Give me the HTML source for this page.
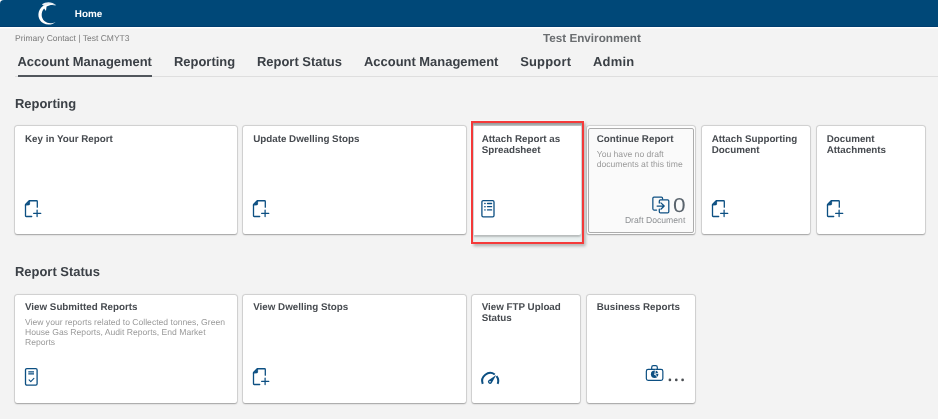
<!DOCTYPE html>
<html lang="en">
<head>
<meta charset="utf-8">
<title>Home</title>
<style>
*{box-sizing:border-box;margin:0;padding:0}
html,body{width:938px;height:419px;overflow:hidden;background:#f3f3f3}
body{position:relative;font-family:"Liberation Sans",Arial,sans-serif;color:#3e4349;-webkit-font-smoothing:antialiased;text-rendering:geometricPrecision}
.abs{position:absolute;white-space:nowrap}
#hdr{position:absolute;left:0;top:0;width:938px;height:26.7px;background:#004878;border-top-left-radius:4px;box-shadow:inset 0 -1px 0 #003e70}
#hdrwrap{position:absolute;left:0;top:0;width:938px;height:29px;background:linear-gradient(#fff 0,#fff 27.8px,#f3f3f3 29px)}
#home{left:74.8px;top:8.8px;font-size:9.9px;line-height:12px;font-weight:bold;color:#fff}
#pc{left:15px;top:33.0px;font-size:8.5px;line-height:11px;color:#7a7a7a}
#env{left:543px;top:32.3px;font-size:11.7px;line-height:14px;font-weight:bold;color:#6a6d70}
.tab{top:53.7px;font-size:12.95px;line-height:16px;font-weight:bold;color:#3b4046}
#sep{position:absolute;left:15px;right:0;top:76px;height:1px;background:#dedede}
#ul{position:absolute;left:17.5px;width:134.3px;top:74.6px;height:2.2px;background:#51565c}
.sec{left:15px;font-size:12.95px;line-height:16px;font-weight:bold;color:#3b4046}
.tile{position:absolute;margin-left:.8px;height:108.7px;background:#fff;border-radius:2px;box-shadow:0 0 0 0.8px rgba(0,0,0,.085),0 .9px 1.6px rgba(0,0,0,.27),0 0 2.5px rgba(0,0,0,.1)}
.r1{top:125.8px}
.r2{top:294.8px}
.r2 .tt{top:7.1px}
.w1 .tt,.w1 .st{left:9.4px}
.w2{width:222.2px}
.w1{width:107.9px}
.tt{position:absolute;left:9.8px;top:8.0px;right:8px;font-size:9.8px;line-height:11.3px;font-weight:bold;color:#474b50}
.st{position:absolute;left:9.8px;right:8px;font-size:8.6px;line-height:9.75px;color:#9a9a9a}
.ic{position:absolute;overflow:visible}
</style>
</head>
<body>
<div id="root" style="position:absolute;left:0;top:0;width:938px;height:419px;will-change:transform">
<div id="hdrwrap"></div>
<div id="hdr"></div>
<svg class="ic" style="left:35.2px;top:-0.1px" width="24.8" height="25.8" viewBox="0 0 24 25">
  <path d="M20.6 5.6 C16.5 2.2 9.5 3.2 5.8 7.6 C1.8 12.4 2.6 19.6 8.2 22.6 C12.2 24.7 17.2 23.8 20 21.2 C16.6 23 12.2 23 9.4 20.6 C5.6 17.3 5.6 11.6 8.8 8.2 L10.6 10.6 L11.2 6.4 C14 4.6 17.6 4.4 20.6 5.6 Z" fill="#fff"/>
  <path d="M6.6 4.2 C10.6 1.6 16.4 1.4 20.6 5.2 C16.8 3.6 12.4 3.6 8.6 5.6 Z" fill="#e8eef4"/>
</svg>
<div id="home" class="abs">Home</div>
<div id="pc" class="abs">Primary Contact | Test CMYT3</div>
<div id="env" class="abs">Test Environment</div>

<div class="abs tab" style="left:17.5px">Account Management</div>
<div class="abs tab" style="left:174px">Reporting</div>
<div class="abs tab" style="left:257px">Report Status</div>
<div class="abs tab" style="left:364px">Account Management</div>
<div class="abs tab" style="left:520.2px;letter-spacing:.2px">Support</div>
<div class="abs tab" style="left:593px;letter-spacing:.25px">Admin</div>
<div id="sep"></div>
<div id="ul"></div>

<div class="abs sec" style="top:95.7px">Reporting</div>

<div class="tile r1 w2" style="left:14.4px"><div class="tt">Key in Your Report</div></div>
<div class="tile r1 w2" style="left:242.6px"><div class="tt">Update Dwelling Stops</div></div>
<div id="redbox" style="position:absolute;left:471.3px;top:120.8px;width:112.7px;height:122.9px;border:2px solid #f53a3a;background:rgba(225,238,238,.45);box-shadow:1.5px 2px 3px rgba(0,0,0,.3), 0 0 0 1px rgba(255,255,255,.55), inset 0 3.5px 3px -1px rgba(0,0,0,.38)"></div>
<div class="tile r1 w1" style="left:472.8px;width:107.1px;top:125.8px;height:109.6px;box-shadow:0 1.2px 2px rgba(0,0,0,.22);border-radius:0 0 2px 0"><div class="tt" style="left:8.1px;top:8px">Attach Report as<br>Spreadsheet</div></div>
<div class="tile r1 w1" style="left:586.5px;background:#fdfdfd"><div style="position:absolute;left:1.2px;top:1.9px;right:1.3px;bottom:1.5px;border:1px solid #acacac;border-radius:2px;background:#fafafa"></div><div class="tt">Continue Report</div>
  <div class="st" style="top:24.5px">You have no draft<br>documents at this time</div>
</div>
<div class="tile r1 w1" style="left:701.5px"><div class="tt">Attach Supporting<br>Document</div></div>
<div class="tile r1 w1" style="left:816.5px"><div class="tt">Document<br>Attachments</div></div>

<div class="abs sec" style="top:264px">Report Status</div>

<div class="tile r2 w2" style="left:14.4px"><div class="tt">View Submitted Reports</div>
  <div class="st" style="top:23.6px">View your reports related to Collected tonnes, Green<br>House Gas Reports, Audit Reports, End Market<br>Reports</div>
</div>
<div class="tile r2 w2" style="left:242.6px"><div class="tt">View Dwelling Stops</div></div>
<div class="tile r2 w1" style="left:471.5px"><div class="tt">View FTP Upload<br>Status</div></div>
<div class="tile r2 w1" style="left:586.5px"><div class="tt">Business Reports</div></div>

<!-- icons -->
<svg class="ic" style="left:24.1px;top:199.6px" width="18" height="18" viewBox="0 0 18 18" fill="none" stroke="#0c4f82" stroke-width="1.3" stroke-linecap="round" stroke-linejoin="round">
  <path d="M7.7 16.5 H2.2 Q1.5 16.5 1.5 15.8 V4.5 L5.2 0.75 H12.6 Q13.3 0.75 13.3 1.45 V7.2"/>
  <path d="M1.7 4.9 L5.6 1 V4.2 Q5.6 4.9 4.9 4.9 Z" fill="#0c4f82" stroke-width="0.8"/>
  <path d="M9.6 13.35 H16.8 M13.1 10.1 V16.6" stroke-width="1.25"/>
</svg>
<svg class="ic" style="left:252.3px;top:199.6px" width="18" height="18" viewBox="0 0 18 18" fill="none" stroke="#0c4f82" stroke-width="1.3" stroke-linecap="round" stroke-linejoin="round">
  <path d="M7.7 16.5 H2.2 Q1.5 16.5 1.5 15.8 V4.5 L5.2 0.75 H12.6 Q13.3 0.75 13.3 1.45 V7.2"/>
  <path d="M1.7 4.9 L5.6 1 V4.2 Q5.6 4.9 4.9 4.9 Z" fill="#0c4f82" stroke-width="0.8"/>
  <path d="M9.6 13.35 H16.8 M13.1 10.1 V16.6" stroke-width="1.25"/>
</svg>
<svg class="ic" style="left:480.5px;top:199.0px" width="15" height="19" viewBox="0 0 15 19" fill="none" stroke="#0c4f82" stroke-width="1.3" stroke-linecap="round" stroke-linejoin="round">
  <rect x="0.9" y="1.7" width="12.1" height="16.1" rx="1.3"/>
  <path d="M6.5 4.5 H10.6 M6.5 7.7 H10.6 M6.5 10.9 H10.6" stroke-width="1.3"/>
  <path d="M3.8 4.5 H4.1 M3.8 7.7 H4.1 M3.8 10.9 H4.1" stroke-width="1.4"/>
</svg>
<svg class="ic" style="left:651.5px;top:195.6px" width="20" height="19" viewBox="0 0 20 19" fill="none" stroke="#0c4f82" stroke-width="1.25" stroke-linecap="round" stroke-linejoin="round">
  <path d="M10.55 3 V2.2 Q10.55 1.05 9.4 1.05 H2 Q0.85 1.05 0.85 2.2 V12.85 Q0.85 14 2 14 H4.6"/>
  <path d="M7.3 7.1 V4.95 Q7.3 3.8 8.45 3.8 H15.65 Q16.8 3.8 16.8 4.95 V15.65 Q16.8 16.8 15.65 16.8 H8.45 Q7.3 16.8 7.3 15.65 V13.2"/>
  <path d="M5.1 10.05 H12 M8.9 6.9 L12.2 10.05 L8.9 13.2"/>
</svg>
<svg class="ic" style="left:711.2px;top:199.6px" width="18" height="18" viewBox="0 0 18 18" fill="none" stroke="#0c4f82" stroke-width="1.3" stroke-linecap="round" stroke-linejoin="round">
  <path d="M7.7 16.5 H2.2 Q1.5 16.5 1.5 15.8 V4.5 L5.2 0.75 H12.6 Q13.3 0.75 13.3 1.45 V7.2"/>
  <path d="M1.7 4.9 L5.6 1 V4.2 Q5.6 4.9 4.9 4.9 Z" fill="#0c4f82" stroke-width="0.8"/>
  <path d="M9.6 13.35 H16.8 M13.1 10.1 V16.6" stroke-width="1.25"/>
</svg>
<svg class="ic" style="left:826.2px;top:199.6px" width="18" height="18" viewBox="0 0 18 18" fill="none" stroke="#0c4f82" stroke-width="1.3" stroke-linecap="round" stroke-linejoin="round">
  <path d="M7.7 16.5 H2.2 Q1.5 16.5 1.5 15.8 V4.5 L5.2 0.75 H12.6 Q13.3 0.75 13.3 1.45 V7.2"/>
  <path d="M1.7 4.9 L5.6 1 V4.2 Q5.6 4.9 4.9 4.9 Z" fill="#0c4f82" stroke-width="0.8"/>
  <path d="M9.6 13.35 H16.8 M13.1 10.1 V16.6" stroke-width="1.25"/>
</svg>
<svg class="ic" style="left:24.0px;top:367.1px" width="15" height="20" viewBox="0 0 15 20" fill="none" stroke="#0c4f82" stroke-width="1.3" stroke-linecap="round" stroke-linejoin="round">
  <rect x="1.5" y="1.6" width="11.6" height="16.5" rx="1.3"/>
  <path d="M4.3 4.9 H10 M4.3 6.9 H10" stroke-width="1.25" stroke-linecap="butt"/>
  <path d="M5.1 12.9 L6.8 14.6 L9.9 11.4" stroke-width="1.1"/>
</svg>
<svg class="ic" style="left:252.3px;top:367.7px" width="18" height="18" viewBox="0 0 18 18" fill="none" stroke="#0c4f82" stroke-width="1.3" stroke-linecap="round" stroke-linejoin="round">
  <path d="M7.7 16.5 H2.2 Q1.5 16.5 1.5 15.8 V4.5 L5.2 0.75 H12.6 Q13.3 0.75 13.3 1.45 V7.2"/>
  <path d="M1.7 4.9 L5.6 1 V4.2 Q5.6 4.9 4.9 4.9 Z" fill="#0c4f82" stroke-width="0.8"/>
  <path d="M9.6 13.35 H16.8 M13.1 10.1 V16.6" stroke-width="1.25"/>
</svg>
<svg class="ic" style="left:480.2px;top:371.9px" width="20" height="14" viewBox="0 0 20 14" fill="none" stroke="#0c4f82" stroke-width="2" stroke-linecap="round" stroke-linejoin="round">
  <path d="M2.71 11.8 A8 8 0 0 1 14.79 2.45" stroke-linecap="butt"/>
  <path d="M16.5 4.07 A8 8 0 0 1 17.69 11.8" stroke-linecap="butt"/>
  <path d="M16.2 3 L11.6 11.2 A2.1 2.1 0 1 1 8.5 8.3 Z" fill="#0c4f82" stroke="none"/>
  <circle cx="10" cy="9.7" r="0.8" fill="#fff" stroke="none"/>
</svg>
<svg class="ic" style="left:645.0px;top:364.3px" width="20" height="18" viewBox="0 0 20 18" fill="none" stroke="#0c4f82" stroke-width="1.2" stroke-linecap="round" stroke-linejoin="round">
  <rect x="1.35" y="5.4" width="16.5" height="11" rx="1.8"/>
  <path d="M6.7 5.2 V3.3 Q6.7 1.7 8.3 1.7 H10.7 Q12.3 1.7 12.3 3.3 V5.2"/>
  <circle cx="9.6" cy="10.3" r="3.7" fill="#0c4f82" stroke="none"/>
  <path d="M9.9 10.3 L10.4 6.2 M9.9 10.3 L13.6 9 M9.9 10.3 L12.6 13.2" stroke="#fff" stroke-width="0.9"/>
</svg>
<div class="abs" id="zero" style="left:673.1px;top:195.1px;font-size:20px;line-height:22px;color:#5a646d;transform:scaleX(1.13);transform-origin:left">0</div>
<div class="abs" id="dd" style="left:624.9px;top:214.9px;font-size:8.65px;line-height:10px;color:#8e9194">Draft Document</div>
<svg class="ic" style="left:667px;top:377px" width="18" height="6" viewBox="0 0 18 6"><circle cx="2.9" cy="2.9" r="1.35" fill="#4a4e52"/><circle cx="9.3" cy="2.9" r="1.35" fill="#4a4e52"/><circle cx="15.6" cy="2.9" r="1.35" fill="#4a4e52"/></svg>

</div>
</body>
</html>
